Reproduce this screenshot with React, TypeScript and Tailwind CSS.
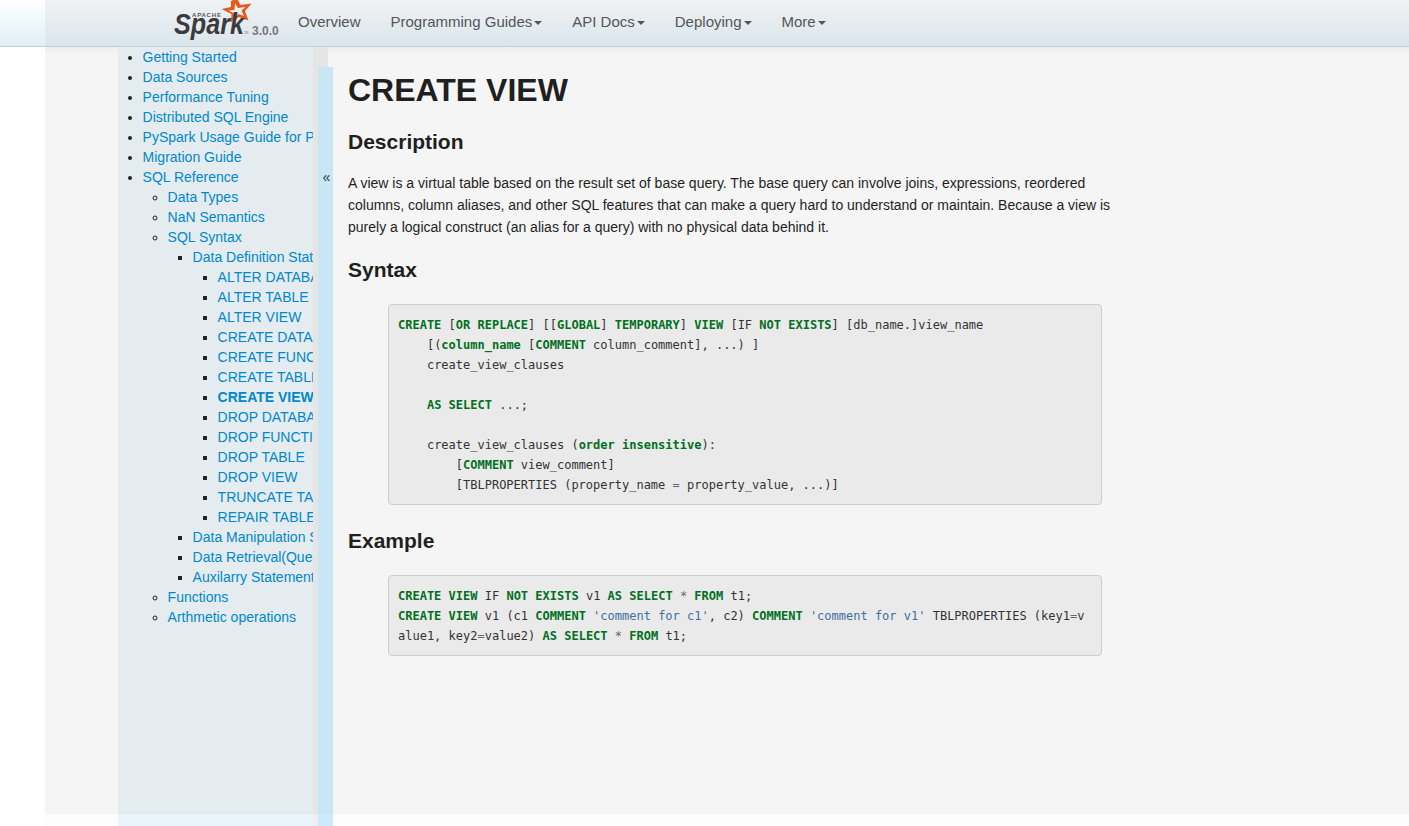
import React from 'react';

// Left nav tree: depth 0 discs, depth 1 circles, depth 2+ squares
type Item = { label: string; active?: boolean; children?: Item[] };

const tree: Item[] = [
    { label: 'Getting Started' },
    { label: 'Data Sources' },
    { label: 'Performance Tuning' },
    { label: 'Distributed SQL Engine' },
    { label: 'PySpark Usage Guide for Pandas with Apache Arrow' },
    { label: 'Migration Guide' },
    {
        label: 'SQL Reference',
        children: [
            { label: 'Data Types' },
            { label: 'NaN Semantics' },
            {
                label: 'SQL Syntax',
                children: [
                    {
                        label: 'Data Definition Statements',
                        children: [
                            { label: 'ALTER DATABASE' },
                            { label: 'ALTER TABLE' },
                            { label: 'ALTER VIEW' },
                            { label: 'CREATE DATABASE' },
                            { label: 'CREATE FUNCTION' },
                            { label: 'CREATE TABLE' },
                            { label: 'CREATE VIEW', active: true },
                            { label: 'DROP DATABASE' },
                            { label: 'DROP FUNCTION' },
                            { label: 'DROP TABLE' },
                            { label: 'DROP VIEW' },
                            { label: 'TRUNCATE TABLE' },
                            { label: 'REPAIR TABLE' },
                        ],
                    },
                    { label: 'Data Manipulation Statements' },
                    { label: 'Data Retrieval(Queries)' },
                    { label: 'Auxilarry Statements' },
                ],
            },
            { label: 'Functions' },
            { label: 'Arthmetic operations' },
        ],
    },
];

const listClass = ['list-disc pl-[24.6px]', 'list-[circle] pl-[25px]', 'list-[square] pl-[25px]', 'list-[square] pl-[25px]'];

function Tree({ items, depth }: { items: Item[]; depth: number }) {
    return (
        <ul className={`${listClass[depth]} text-[#222]`}>
            {items.map((item) => (
                <li key={item.label} className="whitespace-nowrap">
                    <a className={`text-[#0088cc] ${item.active ? 'font-bold' : ''}`}>{item.label}</a>
                    {item.children && <Tree items={item.children} depth={depth + 1} />}
                </li>
            ))}
        </ul>
    );
}

const K = ({ children }: { children: React.ReactNode }) => <span className="font-bold text-[#007020]">{children}</span>;
const S = ({ children }: { children: React.ReactNode }) => <span className="text-[#4070a0]">{children}</span>;
const O = ({ children }: { children: React.ReactNode }) => <span className="text-[#666666]">{children}</span>;

function Code({ children, className }: { children: React.ReactNode; className: string }) {
    return (
        <pre className={`ml-10 w-[714px] rounded border border-[#cccccc] bg-[#eaeaea] py-[9.5px] pr-[14px] pl-[9px] font-['DejaVu_Sans_Mono',monospace] text-xs leading-5 text-[#333] whitespace-pre-wrap break-all ${className}`}>
            {children}
        </pre>
    );
}

function Logo() {
    return (
        <svg width="80" height="46" viewBox="0 0 80 46" className="shrink-0">
            <path
                d="M58 2 L64 -1 L67.5 6 L78.5 4.5 L72 12 L75.5 21.5 L66 18 L58 23 L58.5 15 L48.5 10 L58 8 Z M62 4.5 L61.5 11 L55.5 11.5 L61.5 14.5 L61.5 19 L65.5 15 L71 17 L68.5 11.5 L72.5 8 L65 9 Z"
                fill="#e25a1c"
                fillRule="evenodd"
            />
            <text x="19" y="17.5" fontFamily="'Liberation Sans', sans-serif" fontSize="6" fontWeight="700" letterSpacing="0.8" fill="#555">
                APACHE
            </text>
            <text x="1" y="35" fontFamily="'Liberation Sans', sans-serif" fontSize="29" fontWeight="700" fontStyle="italic" textLength="70" lengthAdjust="spacingAndGlyphs" fill="#3c3a3e">
                Spark
            </text>
            <text x="71" y="35" fontFamily="'Liberation Sans', sans-serif" fontSize="3" fill="#777">
                TM
            </text>
        </svg>
    );
}

function NavItem({ label, caret, className }: { label: string; caret?: boolean; className: string }) {
    return (
        <a className={`flex items-center text-[15px] text-[#555555] ${className}`}>
            {label}
            {caret && <span className="mt-[1px] ml-[2px] border-x-4 border-t-4 border-x-transparent border-t-[#555555]" />}
        </a>
    );
}

export default function App() {
    return (
        <div className="h-[826px] overflow-hidden bg-white font-['Liberation_Sans',Arial,sans-serif] text-sm leading-5 text-[#1f1f1f]">
            {/* top bar */}
            <header className="flex h-[47px] border-b border-[#c3d0d6] bg-[linear-gradient(#f1f2f4,#d9e6ec)]">
                <div className="w-[45px] shrink-0 bg-[linear-gradient(#ffffff,#dfeff6)]" />
                <div className="flex items-center pb-[2px] pl-[128px]">
                    <Logo />
                    <span className="ml-[-1px] mt-[18px] w-[46px] text-xs font-bold text-[#777777]">3.0.0</span>
                    <NavItem label="Overview" className="mr-[30px]" />
                    <NavItem label="Programming Guides" caret className="mr-[30px]" />
                    <NavItem label="API Docs" caret className="mr-[30px]" />
                    <NavItem label="Deploying" caret className="mr-[30px]" />
                    <NavItem label="More" caret className="" />
                </div>
            </header>

            <div className="ml-[45px] flex h-[779px] bg-[linear-gradient(#eeeeee,#f5f5f5_8px,#f5f5f5_767px,#fcfcfc_767px)]">
                <div className="w-[73px] shrink-0" />
                {/* sidebar */}
                <nav className="w-[195px] shrink-0 overflow-hidden bg-[linear-gradient(#e4ecef_767px,#eaf4fb_767px)]">
                    <Tree items={tree} depth={0} />
                </nav>
                <div className="w-[5px] shrink-0 bg-[linear-gradient(#e5e5e5_767px,#eeeeee_767px)]" />
                {/* collapse handle */}
                <div className="flex w-[15px] shrink-0 flex-col">
                    <div className="h-5 w-[10px] bg-[#e5e5e5]" />
                    <div className="flex flex-1 justify-center bg-[linear-gradient(#c9e6f5_747px,#ccebfa_747px)] pt-[100px] pl-[2px] text-[#2d3a4a]">
                        <span>«</span>
                    </div>
                </div>
                {/* article */}
                <main className="w-[775px] shrink-0 pl-[15px]">
                    <h1 className="mt-[23px] text-[32px] leading-10 font-bold">CREATE VIEW</h1>
                    <h2 className="mt-[12px] text-[21px] leading-10 font-bold">Description</h2>
                    <p className="mt-[10px] w-[765px] leading-[22px]">
                        A view is a virtual table based on the result set of base query. The base query can involve joins, expressions, reordered columns, column aliases, and other SQL features that can make a query hard to understand or maintain. Because a view is purely a logical construct (an alias for a query) with no physical data behind it.
                    </p>
                    <h2 className="mt-[12px] text-[21px] leading-10 font-bold">Syntax</h2>
                    <Code className="mt-[14px] h-[201px]">
                        <K>CREATE</K> [<K>OR</K> <K>REPLACE</K>] [[<K>GLOBAL</K>] <K>TEMPORARY</K>] <K>VIEW</K> [IF <K>NOT</K> <K>EXISTS</K>] [db_name.]view_name{'\n'}
                        {'    '}[(<K>column_name</K> [<K>COMMENT</K> column_comment], ...) ]{'\n'}
                        {'    '}create_view_clauses{'\n'}
                        {'\n'}
                        {'    '}<K>AS</K> <K>SELECT</K> ...;{'\n'}
                        {'\n'}
                        {'    '}create_view_clauses (<K>order</K> <K>insensitive</K>):{'\n'}
                        {'        '}[<K>COMMENT</K> view_comment]{'\n'}
                        {'        '}[TBLPROPERTIES (property_name <O>=</O> property_value, ...)]
                    </Code>
                    <h2 className="mt-4 text-[21px] leading-10 font-bold">Example</h2>
                    <Code className="mt-[14px] h-[81px]">
                        <K>CREATE</K> <K>VIEW</K> IF <K>NOT</K> <K>EXISTS</K> v1 <K>AS</K> <K>SELECT</K> <O>*</O> <K>FROM</K> t1;{'\n'}
                        <K>CREATE</K> <K>VIEW</K> v1 (c1 <K>COMMENT</K> <S>'comment for c1'</S>, c2) <K>COMMENT</K> <S>'comment for v1'</S> TBLPROPERTIES (key1<O>=</O>value1, key2<O>=</O>value2) <K>AS</K> <K>SELECT</K> <O>*</O> <K>FROM</K> t1;
                    </Code>
                </main>
            </div>
        </div>
    );
}
